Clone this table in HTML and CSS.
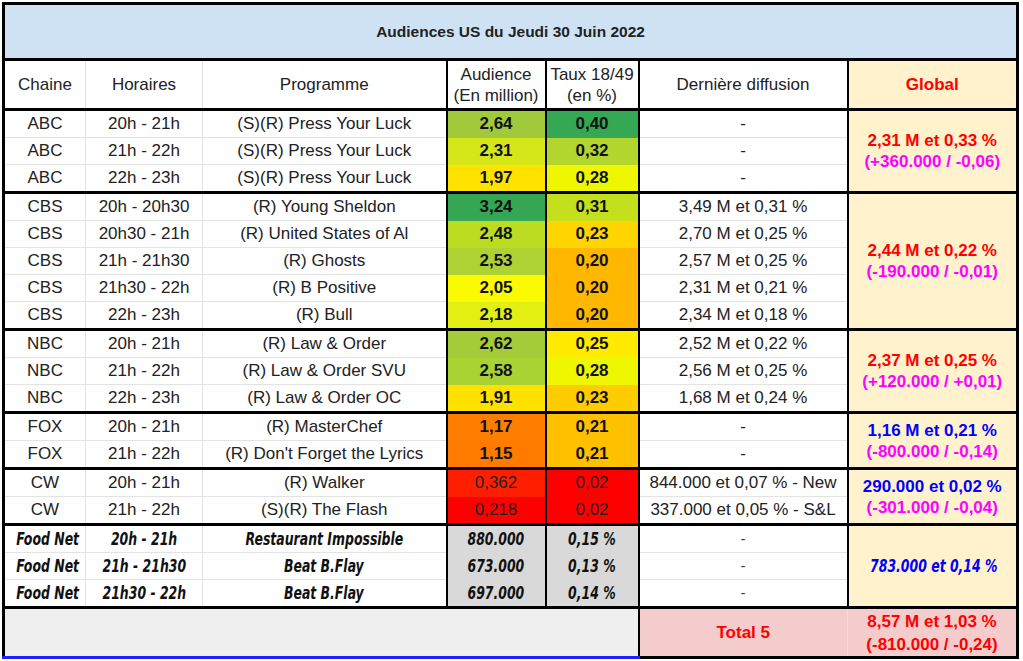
FILE: index.html
```html
<!DOCTYPE html>
<html lang="fr">
<head>
<meta charset="utf-8">
<title>Audiences US du Jeudi 30 Juin 2022</title>
<link rel="stylesheet" href="styles.css">
</head>
<body>
<table class="aud">
  <colgroup>
    <col class="c-chaine"><col class="c-hor"><col class="c-prog"><col class="c-aud"><col class="c-taux"><col class="c-der"><col class="c-glob">
  </colgroup>
  <tr class="title-row"><td colspan="7" class="title">Audiences US du Jeudi 30 Juin 2022</td></tr>
  <tr class="head-row">
    <td>Chaine</td><td>Horaires</td><td>Programme</td>
    <td class="v">Audience<br>(En million)</td><td class="v">Taux 18/49<br>(en %)</td>
    <td class="v">Dernière diffusion</td><td class="glob g-title">Global</td>
  </tr>

  <tr class="grp">
    <td>ABC</td><td>20h - 21h</td><td>(S)(R) Press Your Luck</td>
    <td class="num a1">2,64</td><td class="num t1">0,40</td><td class="v">-</td>
    <td rowspan="3" class="glob"><span class="red">2,31 M et 0,33 %</span><br><span class="mag">(+360.000 / -0,06)</span></td>
  </tr>
  <tr><td>ABC</td><td>21h - 22h</td><td>(S)(R) Press Your Luck</td><td class="num a2">2,31</td><td class="num t2">0,32</td><td class="v">-</td></tr>
  <tr><td>ABC</td><td>22h - 23h</td><td>(S)(R) Press Your Luck</td><td class="num a3">1,97</td><td class="num t3">0,28</td><td class="v">-</td></tr>

  <tr class="grp">
    <td>CBS</td><td>20h - 20h30</td><td>(R) Young Sheldon</td>
    <td class="num a4">3,24</td><td class="num t4">0,31</td><td class="v">3,49 M et 0,31 %</td>
    <td rowspan="5" class="glob"><span class="red">2,44 M et 0,22 %</span><br><span class="mag">(-190.000 / -0,01)</span></td>
  </tr>
  <tr><td>CBS</td><td>20h30 - 21h</td><td>(R) United States of Al</td><td class="num a5">2,48</td><td class="num t5">0,23</td><td class="v">2,70 M et 0,25 %</td></tr>
  <tr><td>CBS</td><td>21h - 21h30</td><td>(R) Ghosts</td><td class="num a6">2,53</td><td class="num t6">0,20</td><td class="v">2,57 M et 0,25 %</td></tr>
  <tr><td>CBS</td><td>21h30 - 22h</td><td>(R) B Positive</td><td class="num a7">2,05</td><td class="num t6">0,20</td><td class="v">2,31 M et 0,21 %</td></tr>
  <tr><td>CBS</td><td>22h - 23h</td><td>(R) Bull</td><td class="num a8">2,18</td><td class="num t6">0,20</td><td class="v">2,34 M et 0,18 %</td></tr>

  <tr class="grp">
    <td>NBC</td><td>20h - 21h</td><td>(R) Law &amp; Order</td>
    <td class="num a9">2,62</td><td class="num t7">0,25</td><td class="v">2,52 M et 0,22 %</td>
    <td rowspan="3" class="glob"><span class="red">2,37 M et 0,25 %</span><br><span class="mag">(+120.000 / +0,01)</span></td>
  </tr>
  <tr><td>NBC</td><td>21h - 22h</td><td>(R) Law &amp; Order SVU</td><td class="num a10">2,58</td><td class="num t3">0,28</td><td class="v">2,56 M et 0,25 %</td></tr>
  <tr><td>NBC</td><td>22h - 23h</td><td>(R) Law &amp; Order OC</td><td class="num a11">1,91</td><td class="num t8">0,23</td><td class="v">1,68 M et 0,24 %</td></tr>

  <tr class="grp">
    <td>FOX</td><td>20h - 21h</td><td>(R) MasterChef</td>
    <td class="num a12">1,17</td><td class="num t9">0,21</td><td class="v">-</td>
    <td rowspan="2" class="glob"><span class="blue">1,16 M et 0,21 %</span><br><span class="mag">(-800.000 / -0,14)</span></td>
  </tr>
  <tr><td>FOX</td><td>21h - 22h</td><td>(R) Don't Forget the Lyrics</td><td class="num a13">1,15</td><td class="num t9">0,21</td><td class="v">-</td></tr>

  <tr class="grp">
    <td>CW</td><td>20h - 21h</td><td>(R) Walker</td>
    <td class="num a14 light">0,362</td><td class="num t10 light">0,02</td><td class="v">844.000 et 0,07 % - New</td>
    <td rowspan="2" class="glob"><span class="blue">290.000 et 0,02 %</span><br><span class="mag">(-301.000 / -0,04)</span></td>
  </tr>
  <tr><td>CW</td><td>21h - 22h</td><td>(S)(R) The Flash</td><td class="num a15 light">0,218</td><td class="num t10 light">0,02</td><td class="v">337.000 et 0,05 % - S&amp;L</td></tr>

  <tr class="grp food">
    <td><span class="cn">Food Net</span></td><td><span class="cn">20h - 21h</span></td><td><span class="cn">Restaurant Impossible</span></td>
    <td class="num gray"><span class="cn">880.000</span></td><td class="num gray"><span class="cn">0,15 %</span></td><td class="v dash">-</td>
    <td rowspan="3" class="glob food-glob"><span class="cn blue">783.000 et 0,14 %</span></td>
  </tr>
  <tr class="food"><td><span class="cn">Food Net</span></td><td><span class="cn">21h - 21h30</span></td><td><span class="cn">Beat B.Flay</span></td><td class="num gray"><span class="cn">673.000</span></td><td class="num gray"><span class="cn">0,13 %</span></td><td class="v dash">-</td></tr>
  <tr class="food"><td><span class="cn">Food Net</span></td><td><span class="cn">21h30 - 22h</span></td><td><span class="cn">Beat B.Flay</span></td><td class="num gray"><span class="cn">697.000</span></td><td class="num gray"><span class="cn">0,14 %</span></td><td class="v dash">-</td></tr>

  <tr class="grp total-row">
    <td colspan="5" class="blank"></td>
    <td class="total">Total 5</td>
    <td class="total tot-glob">8,57 M et 1,03 %<br>(-810.000 / -0,24)</td>
  </tr>
</table>
</body>
</html>
```
FILE: styles.css
```css
html, body {
  margin: 0;
  padding: 0;
  background: #ffffff;
}
body {
  padding: 2px 0 0 2px;
  font-family: "Liberation Sans", Arial, sans-serif;
  color: #222222;
}
.aud {
  border-collapse: collapse;
  width: 1017px;
  table-layout: fixed;
  border: 3px solid #000;
  font-size: 17px;
}
.c-chaine { width: 82px; }
.c-hor { width: 117px; }
.c-prog { width: 244px; }
.c-aud { width: 99px; }
.c-taux { width: 93px; }
.c-der { width: 209px; }
.c-glob { width: 170px; }

.aud td {
  border: 1px solid #e3e3e3;
  text-align: center;
  vertical-align: middle;
  padding: 0 2px;
  height: 26px;
  line-height: 18px;
  white-space: nowrap;
}
.aud td.v { border-left: 2px solid #000; }
.aud td.num { border-left: 2px solid #000; font-weight: bold; color: #111; border-bottom-color: transparent; }
.aud td.glob { border-left: 2px solid #000; background: #fff2cc; font-weight: bold; line-height: 21px; }

.title-row td.title {
  height: 53px;
  background: #cfe2f3;
  font-weight: bold;
  font-size: 15.5px;
  color: #222;
  border: 3px solid #000;
}
.head-row td {
  height: 47px;
  line-height: 21px;
  color: #222;
  border-bottom: 3px solid #000;
}
.head-row td.g-title { color: #ff0000; border-bottom: 3px solid #000; }

.grp td { border-top: 3px solid #000; }

.red { color: #ff0000; }
.mag { color: #ff00ff; }
.blue { color: #0000ff; }

.a1 { background: #a0c93c; }
.a2 { background: #d5e619; }
.a3 { background: #ffe200; }
.a4 { background: #35a653; }
.a5 { background: #bcdc22; }
.a6 { background: #aed134; }
.a7 { background: #fafa00; }
.a8 { background: #e3ee12; }
.a9 { background: #a4cc38; }
.a10 { background: #a9d233; }
.a11 { background: #ffe100; }
.a12 { background: #ff7e00; }
.a13 { background: #ff7b00; }
.a14 { background: #ff1e00; }
.a15 { background: #ff0000; }

.t1 { background: #34a853; }
.t2 { background: #b3d62e; }
.t3 { background: #eff700; }
.t4 { background: #c4e01c; }
.t5 { background: #ffd500; }
.t6 { background: #ffb700; }
.t7 { background: #ffea00; }
.t8 { background: #ffcc00; }
.t9 { background: #ffc000; }
.t10 { background: #ff0000; }
.aud td.light { font-weight: normal; color: #222; }

.food td {
  color: #111;
}
.cn {
  display: inline-block;
  font-family: "DejaVu Sans Condensed", "DejaVu Sans", sans-serif;
  font-weight: bold;
  font-style: italic;
  font-size: 18px;
  line-height: 20px;
  transform: scaleX(0.77);
  transform-origin: center;
}
.food td.dash {
  font-size: 14px;
  color: #333;
}
.aud td.gray { background: #d9d9d9; }

.total-row td {
  height: 47px;
  border-top: 3px solid #000;
}
.total-row td.blank {
  background: #efefef;
  border-bottom: 3px solid #1f1fff;
  border-right: 2px solid #000;
}
.total-row td.total {
  background: #f4cccc;
  color: #ff0000;
  font-weight: bold;
  line-height: 23px;
}
.total-row td.tot-glob { border-left: 1px solid #e6b8b8; }
```
